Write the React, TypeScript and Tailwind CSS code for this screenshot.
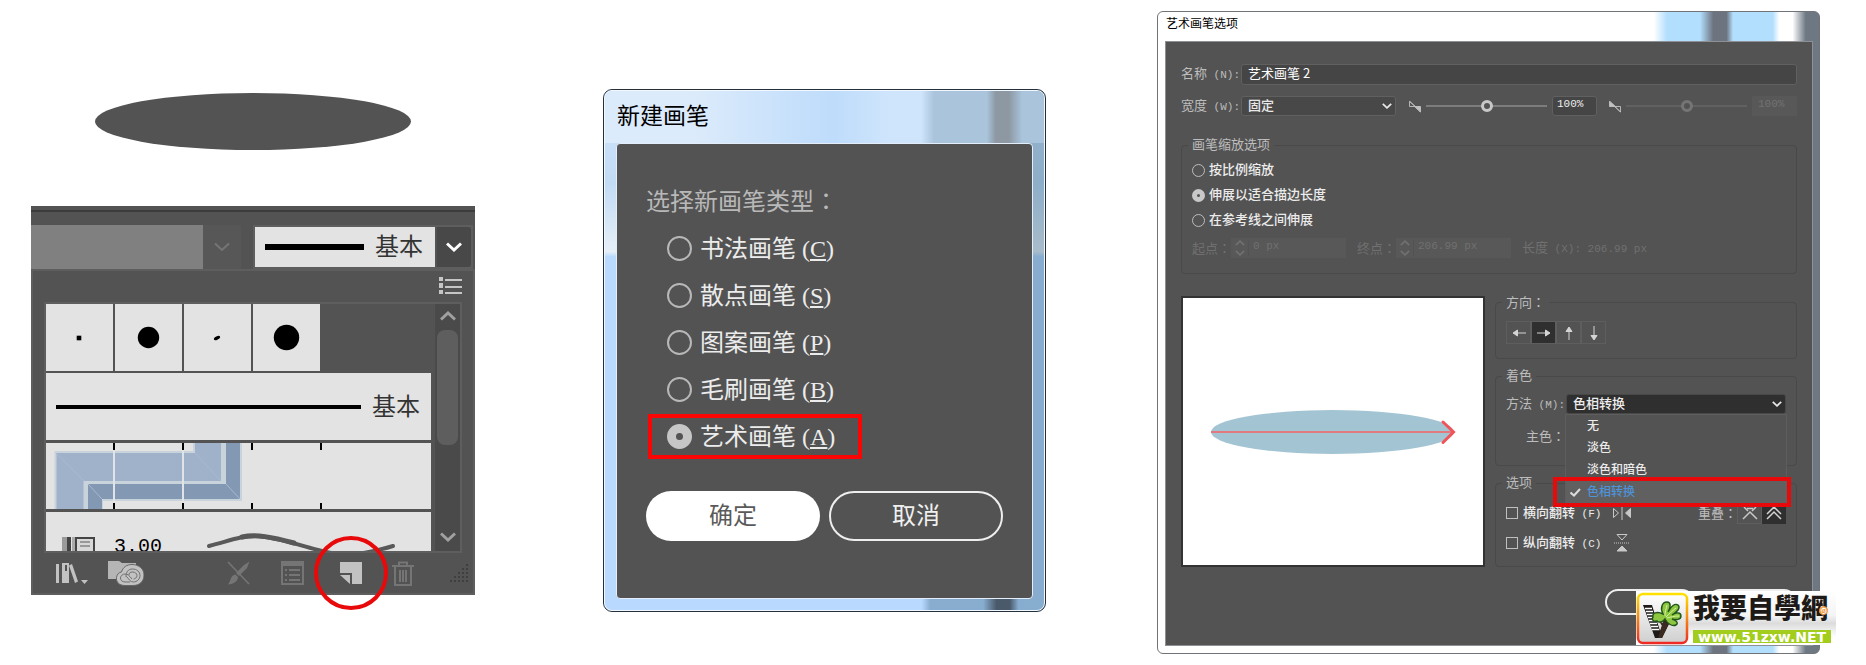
import { useState, type ReactNode } from 'react';

const brushTypes = [
  { name: '书法画笔', key: 'C' },
  { name: '散点画笔', key: 'S' },
  { name: '图案画笔', key: 'P' },
  { name: '毛刷画笔', key: 'B' },
  { name: '艺术画笔', key: 'A' },
];

const scaleOptions = ['按比例缩放', '伸展以适合描边长度', '在参考线之间伸展'];

const colorMethods = ['无', '淡色', '淡色和暗色', '色相转换'];

function Chevron({ className, up, width = 2 }: { className?: string; up?: boolean; width?: number }) {
  return (
    <svg viewBox="0 0 16 10" fill="none" stroke="currentColor" strokeWidth={width} className={className}>
      <path d={up ? 'M1 8.5 8 2l7 6.5' : 'M1 1.5 8 8l7-6.5'} />
    </svg>
  );
}

// Full width colon, centred in its cell
function Colon() {
  return <span className="font-['Noto_Sans_CJK_TC',sans-serif]">：</span>;
}

function Hotkey({ children }: { children: ReactNode }) {
  return <span className="whitespace-pre font-['Liberation_Mono',monospace] text-[11px]">{children}</span>;
}

/* ---------- Brushes panel ---------- */

function BrushPanel() {
  return (
    <section className="bg-[#535353] pt-1">
      <div className="h-0.5 bg-[#3c3c3c]" />
      <div className="mt-[13px] flex h-11 pr-0.5">
        <div className="flex-1 bg-[#808080]" />
        <button type="button" disabled aria-label="变量宽度配置文件" className="flex w-[38px] items-center justify-center bg-[#575757] text-[#757575]">
          <Chevron className="h-[10px] w-4" />
        </button>
        <div className="ml-3 flex w-[220px] gap-0.5 border-2 border-[#5e5e5e]">
          <div className="flex flex-1 items-center justify-between bg-[#e3e3e3] pr-3 pl-[10px]">
            <span className="h-1.5 w-[99px] bg-black" />
            <span className="text-2xl leading-none text-[#333]">基本</span>
          </div>
          <button type="button" aria-label="画笔定义" className="flex w-[34px] items-center justify-center rounded-r bg-[#484848] text-white">
            <Chevron className="h-[10px] w-4" width={3} />
          </button>
        </div>
      </div>

      <div className="border-2 border-[#5e5e5e]">
        <div className="flex justify-end px-[11px] pt-1.5 pb-2">
          <button type="button" aria-label="面板菜单">
            <svg viewBox="0 0 23 17" className="h-[17px] w-[23px]" fill="#c6c6c6">
              <path d="M0 0h4v4H0zM0 6h4v5H0zM0 13h4v4H0zM6 2h17v2H6zM6 9h17v2H6zM6 15h17v2H6z" />
            </svg>
          </button>
        </div>

        <div className="mx-[11px] flex h-[251px] border-2 border-[#5e5e5e]">
          <div className="flex-1 overflow-hidden">
            <div className="flex gap-0.5">
              <BrushCell>
                <rect x="30" y="31" width="6" height="6" rx="2" fill="#999" />
                <rect x="31" y="32" width="4" height="4" />
              </BrushCell>
              <BrushCell>
                <circle cx="33.5" cy="33.5" r="10.7" />
              </BrushCell>
              <BrushCell>
                <ellipse cx="33" cy="34" rx="3.4" ry="1.6" transform="rotate(-28 33 34)" />
              </BrushCell>
              <BrushCell>
                <circle cx="33.5" cy="33.5" r="12.7" />
              </BrushCell>
            </div>

            <div className="mt-0.5 flex h-[67px] items-center justify-between bg-[#e3e3e3] pr-[11px] pl-[10px]">
              <span className="mr-[11px] h-1 flex-1 bg-black" />
              <span className="text-2xl leading-none text-[#333]">基本</span>
            </div>

            <div className="mt-[3px] h-[66px] bg-[#e3e3e3]">
              <svg viewBox="0 0 385 66" className="h-[66px] w-[385px]">
                <path d="M8.500 8H147V0h49v58H57v8H8.500z" fill="#c8d3dc" />
                <path d="M10.500 10H149V0H175V38H37.500V66H10.500z" fill="#a0b1ca" />
                <path d="M180 0h14v56H56V66H42V41h138z" fill="#8398b2" />
                <path d="M10 10l28 28M149 10l26 28M42 41l14 15M180 41l14 15" stroke="#aab9cf" />
                <path d="M68 8v50M137 8v50" stroke="#e0e4e8" strokeWidth="2" />
                <path d="M68 0v7M137 0v7M206 0v7M275 0v7M68 60v6M137 60v6M206 60v6M275 60v6" stroke="#000" strokeWidth="2" />
              </svg>
            </div>

            <div className="mt-[3px] flex h-[39px] bg-[#e3e3e3] pl-4">
              <svg viewBox="0 0 34 14" className="mt-[25px] h-[14px] w-[34px]">
                <path d="M0 0h8v14H0z" fill="#9a9a9a" />
                <path d="M5 0h4v14H5z" fill="#444" />
                <path d="M10 0h3v14h-3z" fill="#aaa" />
                <path d="M14 14V1h18v13" fill="#d8d8d8" stroke="#444" strokeWidth="2" />
                <path d="M18 5h10M18 9h10" stroke="#999" strokeWidth="2" />
              </svg>
              <span className="ml-[18px] pt-[19px] font-['Liberation_Mono',monospace] text-xl leading-8 text-black">3.00</span>
              <svg viewBox="0 0 190 19" className="mt-5 ml-[44px] h-[19px] w-[190px]" fill="none" stroke="#595959" strokeLinecap="round">
                <path d="M3 14C26 8 35 4 50 4s40 8 62 14 38 7 75-4" strokeWidth="4" />
                <path d="M36 5c14-3 30 0 52 6" strokeWidth="5" />
              </svg>
            </div>
          </div>

          <div className="ml-1 flex w-[25px] flex-col items-center bg-[#4a4a4a] text-[#a0a0a0]">
            <Chevron up className="mt-[7px] h-[10px] w-4" width={3} />
            <div className="mt-[9px] h-[115px] w-[21px] rounded-lg bg-[#5e5e5e]" />
            <Chevron className="mt-auto mb-[9px] h-[10px] w-4" width={3} />
          </div>
        </div>

        <div className="flex h-10 items-center pr-[5px] pl-[23px]">
          <button type="button" aria-label="画笔库菜单">
            <svg viewBox="0 0 32 22" className="h-[22px] w-8" fill="#c2c2c2">
              <path d="M0 2h3v19H0zM6 1h7v20H6zm3 2v6h2V3z" fillRule="evenodd" />
              <path d="M13 3.500l3-1.500 6 17.500-3 1.500zM25 18h7l-3.500 4z" />
            </svg>
          </button>
          <button type="button" aria-label="库面板" className="ml-5">
            <svg viewBox="0 0 36 26" className="h-[26px] w-9">
              <path d="M0 1h11l3 2h14v16H0z" fill="#b5b5b5" />
              <path d="M17 25.500C11 25.500 8 22 8.500 17.500 9 14 11 12.500 13.500 12 15 7 19 4.500 24 4.500c7 0 12 4.500 12 10.500s-4 10.500-11 10.500z" fill="#c2c2c2" stroke="#666" />
              <path d="M22 22h-5c-3 0-4.500-2-4.500-4s2-4 4.500-4c3 0 4 1.500 7 5M18 17c0-5 2-8 6.500-8s7.500 3 7.500 6.500-3 6.500-6.500 6.500c-3.500 0-4.500-3-7-5.500M21 15c0-2 1-3 3.500-3s4.500 1.500 4.500 3.500-2 3.500-3.500 3.500" fill="none" stroke="#707070" />
            </svg>
          </button>
          <button type="button" disabled aria-label="移去画笔描边" className="ml-auto">
            <svg viewBox="0 0 23 24" className="h-6 w-[23px]" fill="#757575" stroke="#757575">
              <path d="M1 1l21 22" strokeWidth="1.600" fill="none" />
              <path d="M22.500.500 20 7l-8 8-3-3 8-8zM8.500 13.500l2.500 2.500c0 4-4 7-10 7.500 3-3 2-9 7.500-10z" stroke="none" />
            </svg>
          </button>
          <button type="button" disabled aria-label="所选对象的选项" className="ml-[31px]">
            <svg viewBox="0 0 23 24" className="h-6 w-[23px]" fill="#757575">
              <path d="M0 0h23v24H0zm2 5v17h19V5z" fillRule="evenodd" />
              <path d="M4 8h2v2H4zM4 13h2v2H4zM4 18h2v2H4zM8 8h11v2H8zM8 13h11v2H8zM8 18h11v2H8z" />
            </svg>
          </button>
          <button type="button" aria-label="新建画笔" className="relative ml-9">
            <svg viewBox="0 0 22 22" className="size-[22px]" fill="#c2c2c2">
              <path d="M0 0h22v22H12V11H0z" />
              <path d="M0 13h10v9z" />
            </svg>
            <span className="absolute top-1/2 left-1/2 size-[74px] -translate-x-1/2 -translate-y-1/2 rounded-full border-4 border-[#e80a0a]" />
          </button>
          <button type="button" disabled aria-label="删除画笔" className="ml-[30px]">
            <svg viewBox="0 0 22 25" className="h-[25px] w-[22px]" fill="none" stroke="#757575" strokeWidth="2">
              <path d="M0 5h22M7 5V1.500h8V5M3 6v18h16V6M8 9v12M11 9v12M14 9v12" />
            </svg>
          </button>
          <svg viewBox="0 0 18 18" className="ml-9 size-[18px]" fill="#3f3f3f">
            <path d="M16 0h2v2h-2zM12 4h2v2h-2zM16 4h2v2h-2zM8 8h2v2H8zM12 8h2v2h-2zM16 8h2v2h-2zM4 12h2v2H4zM8 12h2v2H8zM12 12h2v2h-2zM16 12h2v2h-2zM0 16h2v2H0zM4 16h2v2H4zM8 16h2v2H8zM12 16h2v2h-2zM16 16h2v2h-2z" />
          </svg>
        </div>
      </div>
    </section>
  );
}

function BrushCell({ children }: { children: ReactNode }) {
  return (
    <div className="size-[67px] bg-[#e3e3e3]">
      <svg viewBox="0 0 67 67" className="size-[67px]">{children}</svg>
    </div>
  );
}

/* ---------- New brush dialog ---------- */

function NewBrushDialog() {
  const [type, setType] = useState('A');

  return (
    <section className="overflow-hidden rounded-[9px] border border-[#26303a] bg-[linear-gradient(to_right,transparent_72%,rgba(0,50,80,0.27)_74%,rgba(0,50,80,0.27)_86%,#4a5a6a_89%,#4a5a6a_92%,rgba(0,50,80,0.27)_94%),linear-gradient(to_bottom,#cfe4fb_0,#c2dbf5_18%,#e6eff8_31%,#b9dafe_32%)]">
      <div className="rounded-lg border border-[#f2f8ff]">
        <h2 className="flex h-[52px] items-center rounded-t-lg bg-[linear-gradient(to_right,#dcebfb_0,#dcebfb_20%,#bedcfb_52%,#cfe5fc_65%,#cfe5fc_72%,#a9c4db_75%,#a9c4db_87%,#8d98a3_89%,#8d98a3_92%,#a9c4db_95%)] pl-3 text-[23px] text-black">
          新建画笔
        </h2>
        <div className="mx-[11px] mb-[11px] rounded-sm border border-[#e4eefa] bg-[#535353] px-[29px] pt-11 pb-[57px]">
          <p className="text-2xl leading-6 text-[#b8b8b8]">
            选择新画笔类型<Colon />
          </p>
          <div className="mt-[11px]">
            {brushTypes.map((b) => (
              <label
                key={b.key}
                className="relative flex h-[47px] items-center gap-2 pl-[21px] text-2xl leading-none text-[#ececec]"
              >
                {b.key === type && <span className="absolute inset-y-px left-0.5 w-[214px] border-4 border-[#fb0404]" />}
                <input
                  type="radio"
                  name="brush-type"
                  checked={b.key === type}
                  onChange={() => setType(b.key)}
                  className="size-[25px] shrink-0 appearance-none rounded-full border-2 border-[#b8b8b8] checked:border-[9px] checked:border-[#c6c6c6]"
                />
                <span>
                  {b.name} (<u className="decoration-2 underline-offset-2">{b.key}</u>)
                </span>
              </label>
            ))}
          </div>
          <div className="mt-[31px] flex gap-[9px] text-2xl leading-none">
            <button type="button" className="h-[50px] w-[174px] rounded-full bg-white text-[#5a5a5a]">
              确定
            </button>
            <button type="button" className="h-[50px] w-[174px] rounded-full border-2 border-[#eee] text-[#f0f0f0]">
              取消
            </button>
          </div>
        </div>
      </div>
    </section>
  );
}

/* ---------- Art brush options dialog ---------- */

function Group({ title, className, children }: { title: ReactNode; className: string; children: ReactNode }) {
  return (
    <fieldset className={`min-w-0 rounded-sm border border-[#494949] pl-[10px] ${className}`}>
      <legend className="-ml-1 px-1 leading-4 text-[#bdbdbd]">{title}</legend>
      {children}
    </fieldset>
  );
}

function WidthIcon({ flip }: { flip?: boolean }) {
  return (
    <svg viewBox="0 0 13 13" className="h-[13px] w-3 shrink-0" stroke="#c0c0c0">
      <path d="M.500 1v5.500H7z" fill={flip ? '#c0c0c0' : 'none'} />
      <path d="M12.500 12.500V6.500H6z" fill={flip ? 'none' : '#c0c0c0'} />
      <path d="M.500.500l12 12" />
    </svg>
  );
}

function WidthSlider({ disabled }: { disabled?: boolean }) {
  return (
    <input
      type="range"
      aria-label="宽度"
      disabled={disabled}
      defaultValue={50}
      className="mx-[5px] h-3 w-0 min-w-0 flex-1 appearance-none bg-transparent text-[#c8c8c8] disabled:text-[#757575] [&::-webkit-slider-runnable-track]:h-0.5 [&::-webkit-slider-runnable-track]:bg-[#7d7d7d] disabled:[&::-webkit-slider-runnable-track]:bg-[#616161] [&::-webkit-slider-thumb]:-mt-[5px] [&::-webkit-slider-thumb]:size-3 [&::-webkit-slider-thumb]:appearance-none [&::-webkit-slider-thumb]:rounded-full [&::-webkit-slider-thumb]:border-[3px] [&::-webkit-slider-thumb]:border-current [&::-webkit-slider-thumb]:bg-[#535353]"
    />
  );
}

function SpinField({ label, value }: { label: string; value: string }) {
  return (
    <label className="flex items-center">
      <span className="w-[39px] shrink-0 whitespace-nowrap">{label}<Colon /></span>
      <span className="flex h-5 w-[115px] items-center bg-[#585858]">
        <span className="flex w-[18px] shrink-0 flex-col items-center gap-1 border-r border-[#535353]">
          <Chevron up className="h-[6px] w-[10px]" width={3} />
          <Chevron className="h-[6px] w-[10px]" width={3} />
        </span>
        <input
          disabled
          defaultValue={value}
          className="w-0 min-w-0 flex-1 bg-transparent pb-1 pl-1 font-['Liberation_Mono',monospace] text-[11px]"
        />
      </span>
    </label>
  );
}

const arrows = [
  { label: '向左', d: 'M15 7H3M6.500 4 2 7l4.500 3z' },
  { label: '向右', d: 'M1 7h12M9.500 4 14 7l-4.500 3z' },
  { label: '向上', d: 'M8 14V2M5 5.500 8 1l3 4.500z' },
  { label: '向下', d: 'M8 0v12M5 9.500 8 14l3-4.500z' },
];

function ArtBrushDialog() {
  const [scale, setScale] = useState(1);
  const [direction, setDirection] = useState(1);
  const [method, setMethod] = useState('色相转换');

  return (
    <section className="relative min-w-0 text-[13px] leading-[14px]">
      <div className="rounded-md border border-[#707478] bg-[linear-gradient(to_right,#fff_75%,#b3dffe_77%,#b3dffe_82%,#6d7480_84%,#6d7480_86%,#b3dffe_87%,#b3dffe_93%,#fff_94%,#fff_96%,#6d7883_98%)] pr-1.5 pb-[7px] pl-[7px]">
        <h2 className="flex h-[29px] items-center pt-px pb-1.5 pl-px text-xs text-black">艺术画笔选项</h2>
        <div className="border border-[#8d9195] bg-[#535353] pt-[22px] pr-[15px] pb-[30px] pl-[15px] text-[#bdbdbd]">
          <label className="flex items-center">
            <span className="w-[60px] shrink-0 whitespace-nowrap">名称<Hotkey> (N):</Hotkey></span>
            <input
              defaultValue="艺术画笔 2"
              className="h-[21px] w-0 min-w-0 flex-1 rounded-[3px] border border-[#606060] bg-[#454545] pb-1 pl-1.5 font-['Noto_Sans_CJK_SC',sans-serif] text-white"
            />
          </label>

          <div className="mt-[11px] flex items-center">
            <label htmlFor="width-mode" className="w-[60px] shrink-0 whitespace-nowrap">宽度<Hotkey> (W):</Hotkey></label>
            <div className="relative">
              <select
                id="width-mode"
                className="block h-5 w-[155px] appearance-none rounded-[3px] border border-[#606060] bg-[#484848] pl-1.5 font-medium text-[#e8e8e8]"
              >
                <option>固定</option>
              </select>
              <Chevron className="pointer-events-none absolute top-[7px] right-1 h-1.5 w-[10px] text-[#e8e8e8]" width={3} />
            </div>
            <span className="w-[13px]" />
            <WidthIcon />
            <WidthSlider />
            <input aria-label="最小宽度" defaultValue="100%" className="h-5 w-[45px] rounded-[3px] border border-[#606060] bg-[#454545] pb-1 pl-1 font-['Liberation_Mono',monospace] text-[11px] text-[#eee]" />
            <span className="w-3" />
            <WidthIcon flip />
            <WidthSlider disabled />
            <input aria-label="最大宽度" disabled defaultValue="100%" className="h-5 w-[45px] bg-[#585858] pb-1 pl-[6px] font-['Liberation_Mono',monospace] text-[11px] text-[#727272]" />
          </div>

          <Group title="画笔缩放选项" className="mt-[21px] pt-[10px] pb-[15px]">
            <div className="flex flex-col gap-[11px]">
              {scaleOptions.map((opt, i) => (
                <label key={opt} className="flex h-[14px] items-center gap-1 font-medium text-[#ececec]">
                  <input
                    type="radio"
                    name="scale"
                    checked={scale === i}
                    onChange={() => setScale(i)}
                    className="size-[13px] appearance-none rounded-full border border-[#bdbdbd] checked:border-[5px] checked:border-[#c8c8c8]"
                  />
                  {opt}
                </label>
              ))}
              <div className="flex items-center gap-[11px] text-[#707070]">
                <SpinField label="起点" value="0 px" />
                <SpinField label="终点" value="206.99 px" />
                <span className="whitespace-nowrap">长度<Hotkey> (X): 206.99 px</Hotkey></span>
              </div>
            </div>
          </Group>

          <div className="mt-5 grid grid-cols-[304fr_302fr] gap-[10px]">
            <div className="mt-0.5 flex items-center border-2 border-[#333] bg-white">
              <svg viewBox="0 0 300 266" className="w-full">
                <ellipse cx="149.500" cy="133" rx="121.500" ry="22" fill="#a3c4d3" />
                <path d="M28 133h241" stroke="#e2797f" strokeWidth="2" />
                <path d="M260 123l10.500 10L260 143.500" fill="none" stroke="#f05358" strokeWidth="3" strokeLinecap="round" />
              </svg>
            </div>

            <div className="flex min-w-0 flex-col gap-[9px]">
              <Group title={<>方向<Colon /></>} className="pt-[10px] pb-[14px]">
                <div className="flex">
                  {arrows.map((a, i) => (
                    <button
                      key={a.label}
                      type="button"
                      aria-label={a.label}
                      onClick={() => setDirection(i)}
                      className={`flex h-[23px] w-[25px] items-center justify-center border border-[#5e5e5e] ${direction === i ? 'bg-[#2f2f2f]' : ''}`}
                    >
                      <svg viewBox="0 0 16 14" className="h-[14px] w-4 shrink-0" stroke="#d4d4d4" fill="#d4d4d4" strokeWidth="1">
                        <path d={a.d} />
                      </svg>
                    </button>
                  ))}
                </div>
              </Group>

              <Group title="着色" className="pt-[10px] pr-[10px] pb-[18px]">
                <div className="flex items-center">
                  <label htmlFor="method" className="w-[60px] shrink-0 whitespace-nowrap">方法<Hotkey> (M):</Hotkey></label>
                  <div className="relative flex-1">
                    <select
                      id="method"
                      value={method}
                      onChange={(e) => setMethod(e.target.value)}
                      className="block h-5 w-full appearance-none rounded-[3px] border border-[#484848] bg-[#2f2f2f] pl-1.5 font-medium text-[#eee]"
                    >
                      {colorMethods.map((m) => (
                        <option key={m}>{m}</option>
                      ))}
                    </select>
                    <Chevron className="pointer-events-none absolute top-[7px] right-1 h-1.5 w-[10px] text-[#e8e8e8]" width={3} />
                    <div role="listbox" aria-label="方法" className="absolute -inset-x-px top-full z-10 border border-[#5e5e5e] bg-[#535353] font-medium text-[#ececec]">
                      {colorMethods.map((m) => (
                        <button
                          key={m}
                          type="button"
                          role="option"
                          aria-selected={m === method}
                          onClick={() => setMethod(m)}
                          className="relative flex h-[22px] w-full items-center pl-[21px] text-xs aria-selected:bg-[#606060] aria-selected:text-[#4d93d9]"
                        >
                          {m === method && (
                            <>
                              <svg viewBox="0 0 11 9" className="absolute left-1 h-[9px] w-[11px]" fill="none" stroke="#dcdcdc" strokeWidth="2">
                                <path d="M.500 4.500 4 7.500 10 1" />
                              </svg>
                              <span className="absolute -top-1 -right-[5px] -bottom-1 -left-[13px] border-4 border-[#e80a0a]" />
                            </>
                          )}
                          {m}
                        </button>
                      ))}
                    </div>
                  </div>
                </div>
                <p className="mt-3 pl-5 leading-5">主色<Colon /></p>
              </Group>

              <Group title="选项" className="pt-[11px] pr-[10px] pb-3">
                <div className="flex h-[22px] items-center">
                  <label className="flex items-center gap-[5px] font-medium text-[#ececec]">
                    <input type="checkbox" className="size-3 appearance-none border border-[#c0c0c0]" />
                    <span className="whitespace-nowrap">横向翻转<Hotkey> (F)</Hotkey></span>
                  </label>
                  <svg viewBox="0 0 18 14" className="ml-3 h-[14px] w-[18px]" stroke="#c8c8c8" fill="none">
                    <path d="M.500 2.500v9L5.500 7zM9 0v14" />
                    <path d="M17.500 2.500v9L12.500 7z" fill="#c8c8c8" />
                  </svg>
                  <span className="ml-auto whitespace-nowrap">重叠<Colon /></span>
                  <button type="button" aria-label="不调整边角和折叠" className="flex h-[22px] w-[25px] items-center justify-center border border-[#5e5e5e]">
                    <svg viewBox="0 0 16 14" className="h-[14px] w-4 shrink-0" stroke="#c8c8c8" fill="none" strokeWidth="1.500">
                      <path d="M1 13 8 6l7 7M2 1l4 4M14 1l-4 4M5 2.500h6" />
                    </svg>
                  </button>
                  <button type="button" aria-label="调整边角和折叠" className="flex h-[22px] w-6 items-center justify-center bg-[#2f2f2f]">
                    <svg viewBox="0 0 16 14" className="h-[14px] w-4 shrink-0" stroke="#d4d4d4" fill="none" strokeWidth="1.500">
                      <path d="M1 8 8 1l7 7M1 13 8 6l7 7" />
                    </svg>
                  </button>
                </div>
                <div className="mt-2 flex h-[22px] items-center">
                  <label className="flex items-center gap-[5px] font-medium text-[#ececec]">
                    <input type="checkbox" className="size-3 appearance-none border border-[#c0c0c0]" />
                    <span className="whitespace-nowrap">纵向翻转<Hotkey> (C)</Hotkey></span>
                  </label>
                  <svg viewBox="0 0 16 18" className="ml-[13px] h-[18px] w-4" stroke="#c8c8c8" fill="none">
                    <path d="M3 .500h10L8 6z" />
                    <path d="M0 9h16" strokeDasharray="1 1" />
                    <path d="M3 17h10L8 12z" fill="#c8c8c8" />
                  </svg>
                </div>
              </Group>
            </div>
          </div>

          <div className="mt-[22px] flex justify-end gap-3">
            <button type="button" aria-label="确定" className="h-[26px] w-[90px] rounded-full border-2 border-[#eee]" />
            <button type="button" aria-label="取消" className="h-[26px] w-[90px] rounded-full border-2 border-[#eee]" />
          </div>
        </div>
      </div>
      <SiteLogo />
    </section>
  );
}

function SiteLogo() {
  return (
    <a href="#home" className="absolute -right-4 bottom-[9px] z-20 flex h-[54px] w-[200px] items-center bg-[linear-gradient(to_bottom,#fff,#f4f4f4_45%,#dcdcdc_60%,#fff_85%)]">
      <svg viewBox="0 0 53 53" className="size-[53px] shrink-0">
        <defs>
          <linearGradient id="frame" x1="0" y1="0" x2="0" y2="1">
            <stop offset="0" stopColor="#ffe100" />
            <stop offset="1" stopColor="#ee2a24" />
          </linearGradient>
          <linearGradient id="plate" x1="0" y1="0" x2="0" y2="1">
            <stop offset="0" stopColor="#fff" />
            <stop offset="1" stopColor="#cfcfcf" />
          </linearGradient>
        </defs>
        <rect x="2" y="2" width="49" height="49" rx="5" fill="url(#plate)" stroke="url(#frame)" strokeWidth="2.500" />
        <path d="M7 13h9l8 26 4-11h7L26 46h-7z" fill="#1d1a18" />
        <path d="M9 16.500h7M10 19.500h7M11 22.500h7M12 25.500h7M13 28.500h7M14 31.500h7M15 34.500h7M16 37.500h7" stroke="#fff" strokeWidth="1.300" />
        <path d="M22 46l4-12-3-5 4 2 1-8 2 8 7-5-5 7-6 13z" fill="#3b2a20" />
        <path d="M27 22c-3-6-1-12 4-12 4 0 4 5 1 10 3-6 7-9 10-7 3 3-1 7-6 10 4-3 9-3 9 1s-5 4-9 3c4 1 7 4 4 6-4 2-9-2-11-6-2 3-6 4-8 2-3 1-6-1-4-4-1-4 4-6 10-3z" fill="#8dc63f" stroke="#20541c" strokeWidth="1.400" />
        <path d="M31 13c-1 4-2 7-2 11M40 16c-4 3-7 6-10 9M43 24c-5 0-8 1-12 2" fill="none" stroke="#d9f0a0" />
      </svg>
      <div className="ml-1 flex w-[138px] flex-col">
        <span className="relative text-[27px] leading-8 font-black whitespace-nowrap text-[#1d1a18]">
          我要自學網
          <span className="absolute top-[13px] right-[3px] flex size-[9px] items-center justify-center rounded-full border border-[#f28a1c] bg-white text-[8px] leading-none text-[#f28a1c]">@</span>
        </span>
        <span className="mt-[5px] flex h-[13px] items-center justify-center bg-[#a2cd1c] font-['DejaVu_Sans',sans-serif] text-[14px] leading-none font-bold text-white">
          www.51zxw.NET
        </span>
      </div>
    </a>
  );
}

export default function App() {
  return (
    <main className="grid grid-cols-[444fr_460fr_663fr] items-start gap-x-[111px] bg-white pt-[11px] pr-[46px] pb-3 pl-[31px] font-['Liberation_Serif','Noto_Sans_CJK_SC',sans-serif]">
      <div className="pt-[82px]">
        <div className="mx-auto mb-14 h-[57px] w-[71%] rounded-[50%] bg-[#535353]" />
        <BrushPanel />
      </div>
      <div className="pt-[78px] pl-[17px]">
        <NewBrushDialog />
      </div>
      <ArtBrushDialog />
    </main>
  );
}
